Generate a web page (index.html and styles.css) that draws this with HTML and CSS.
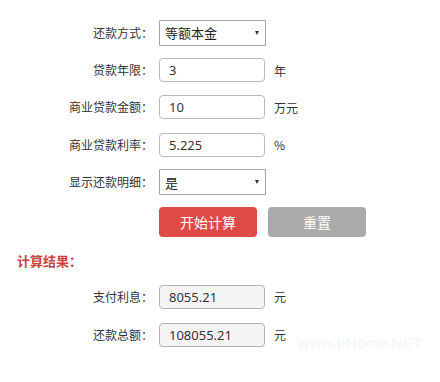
FILE: index.html
```html
<!DOCTYPE html>
<html lang="zh-CN">
<head>
<meta charset="utf-8">
<title>房贷计算器</title>
<link rel="stylesheet" href="styles.css">
</head>
<body>
<div class="calc">
  <div class="form">
    <div class="row">
      <span class="lbl">还款方式：</span>
      <div class="select"><span>等额本金</span><i class="arrow"></i></div>
    </div>
    <div class="row">
      <span class="lbl">贷款年限：</span>
      <input class="field" type="text" value="3">
      <span class="unit">年</span>
    </div>
    <div class="row">
      <span class="lbl">商业贷款金额：</span>
      <input class="field" type="text" value="10">
      <span class="unit">万元</span>
    </div>
    <div class="row">
      <span class="lbl">商业贷款利率：</span>
      <input class="field" type="text" value="5.225">
      <span class="unit">%</span>
    </div>
    <div class="row">
      <span class="lbl">显示还款明细：</span>
      <div class="select"><span>是</span><i class="arrow"></i></div>
    </div>
  </div>
  <div class="btns">
    <button class="btn btn-red" type="button">开始计算</button>
    <button class="btn btn-gray" type="button">重置</button>
  </div>
  <div class="result-title">计算结果：</div>
  <div class="result">
    <div class="row rrow">
      <span class="lbl">支付利息：</span>
      <input class="field readonly" type="text" value="8055.21" readonly>
      <span class="unit">元</span>
    </div>
    <div class="row rrow">
      <span class="lbl">还款总额：</span>
      <input class="field readonly" type="text" value="108055.21" readonly>
      <span class="unit">元</span>
    </div>
  </div>
  <div class="watermark">www.pHome.NET</div>
</div>
</body>
</html>
```
FILE: styles.css
```css
* { box-sizing: border-box; }
html, body {
  margin: 0;
  padding: 0;
  background: #ffffff;
}
body {
  font-family: "Noto Sans CJK SC", "Noto Sans", sans-serif;
  font-size: 12px;
  color: #333333;
  width: 440px;
  height: 382px;
  overflow: hidden;
}
.calc {
  position: relative;
  padding-top: 14px;
}
.row {
  display: grid;
  grid-template-columns: 155px 107px auto;
  column-gap: 4px;
  align-items: center;
  height: 37.4px;
}
.lbl {
  text-align: right;
  font-size: 12px;
  color: #333333;
  white-space: nowrap;
  line-height: 1;
  padding-right: 2px;
}
.select {
  height: 26px;
  border: 1px solid #a3a3a3;
  border-radius: 1px;
  background: #ffffff;
  display: flex;
  align-items: center;
  justify-content: space-between;
  padding: 0 6px 0 5px;
  font-size: 13px;
  color: #222222;
}
.arrow {
  width: 0;
  height: 0;
  border-left: 2.5px solid transparent;
  border-right: 2.5px solid transparent;
  border-top: 4px solid #333333;
}
.field {
  width: 106px;
  height: 24px;
  border: 1px solid #b9b9b9;
  border-radius: 4px;
  padding: 0 0 0 9px;
  font-family: "Noto Sans", "Noto Sans CJK SC", sans-serif;
  font-size: 13px;
  color: #333333;
  background: #ffffff;
  outline: none;
}
.field.readonly {
  background: #f4f4f4;
  border-color: #b3b3b3;
}
.unit {
  padding-left: 4px;
  font-size: 12px;
  color: #333333;
}
.btns {
  display: flex;
  gap: 11px;
  padding-left: 159px;
  margin-top: 6px;
}
.btn {
  width: 98px;
  height: 30px;
  border: none;
  border-radius: 4px;
  color: #ffffff;
  font-family: "Noto Sans CJK SC", sans-serif;
  font-size: 14px;
  padding: 0;
  line-height: 30px;
}
.btn-red { background: #de4a45; }
.btn-gray { background: #aaaaaa; }
.result-title {
  margin-top: 15px;
  padding-left: 17px;
  font-size: 13px;
  font-weight: bold;
  color: #c8443c;
  line-height: 18px;
}
.result {
  margin-top: 8px;
}
.rrow {
  height: 38px;
}
.watermark {
  position: absolute;
  left: 298px;
  top: 334px;
  font-family: "Liberation Sans", sans-serif;
  font-size: 15px;
  font-weight: bold;
  color: #f3f8fb;
}
```
